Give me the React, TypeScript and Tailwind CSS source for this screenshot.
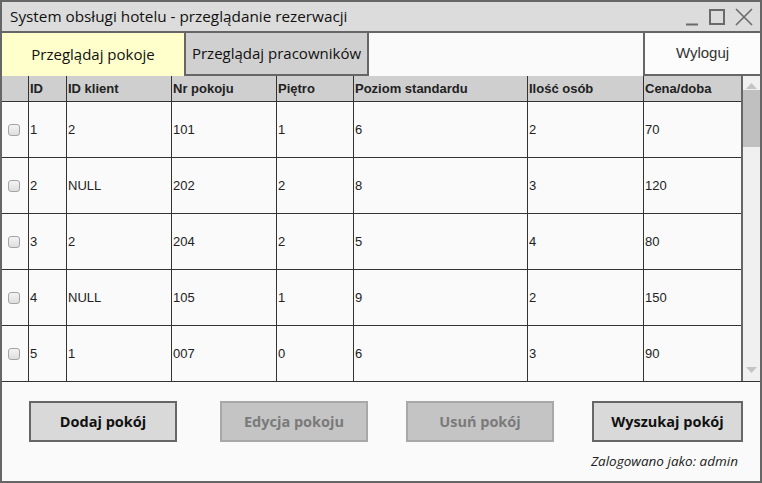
const rows = [
  ['1', '2', '101', '1', '6', '2', '70'],
  ['2', 'NULL', '202', '2', '8', '3', '120'],
  ['3', '2', '204', '2', '5', '4', '80'],
  ['4', 'NULL', '105', '1', '9', '2', '150'],
  ['5', '1', '007', '0', '6', '3', '90'],
];

const headers = ['ID', 'ID klient', 'Nr pokoju', 'Piętro', 'Poziom standardu', 'Ilość osób', 'Cena/doba'];
const widths = ['w-[38px]', 'w-[105px]', 'w-[105px]', 'w-[77px]', 'w-[174px]', 'w-[116px]', 'w-[98px]'];

function Checkbox() {
  return (
    <div className="w-[12px] h-[12px] rounded-[3px] border border-[#a3a3a3] bg-gradient-to-b from-[#f4f4f4] to-[#dedede]" />
  );
}

function WindowControls() {
  return (
    <div className="flex items-center gap-[10px] text-[#6a6a6a]">
      <svg width="14" height="18" viewBox="0 0 14 18">
        <path d="M1 16.5 H13" stroke="currentColor" strokeWidth="2" />
      </svg>
      <svg width="16" height="18" viewBox="0 0 16 18">
        <rect x="1" y="2" width="14" height="14" fill="none" stroke="currentColor" strokeWidth="2" />
      </svg>
      <svg width="18" height="18" viewBox="0 0 18 18">
        <path d="M1 1 L17 17 M17 1 L1 17" stroke="currentColor" strokeWidth="1.6" />
      </svg>
    </div>
  );
}

function ActionButton({ label, disabled, wide }: { label: string; disabled?: boolean; wide?: boolean }) {
  const size = wide ? 'w-[151px]' : 'w-[148px]';
  return (
    <button
      className={
        disabled
          ? `${size} h-[41px] border-2 border-[#a8a8a8] bg-[#c4c4c4] text-[#7a7a7a] text-[14.5px] font-bold`
          : `${size} h-[41px] border-2 border-[#666] bg-[#d9d9d9] text-[#111] text-[14.5px] font-bold`
      }
    >
      {label}
    </button>
  );
}

export default function App() {
  return (
    <div
      className="w-[762px] h-[483px] border-2 border-[#666] bg-[#fafafa] flex flex-col overflow-hidden"
      style={{ fontFamily: '"Open Sans", sans-serif' }}
    >
      {/* title bar */}
      <div className="h-[31px] shrink-0 bg-[#dcdcdc] border-b-2 border-[#666] flex items-center justify-between pl-[8px] pr-[7px]">
        <span className="text-[15.3px] font-medium text-[#111]">System obsługi hotelu - przeglądanie rezerwacji</span>
        <WindowControls />
      </div>

      {/* tabs */}
      <div className="h-[43px] shrink-0 flex">
        <div className="w-[182px] bg-[#ffffcc] flex items-center justify-center text-[15px] font-medium text-[#111]">
          Przeglądaj pokoje
        </div>
        <div className="w-[185px] bg-[#d0d0d0] border-2 border-t-0 border-[#666] flex items-center justify-center text-[15px] font-medium text-[#111]">
          Przeglądaj pracowników
        </div>
        <div className="flex-1" />
        <div
          className="w-[117px] bg-[#fcfcfc] border-l-2 border-b-2 border-[#666] flex items-center justify-center text-[15px] text-[#333]"
          style={{ fontFamily: '"Liberation Sans", Arial, sans-serif' }}
        >
          Wyloguj
        </div>
      </div>

      {/* table */}
      <div
        className="h-[306px] shrink-0 flex border-b border-[#333]"
        style={{ fontFamily: '"Liberation Sans", Arial, sans-serif' }}
      >
        <div className="w-[739px] flex flex-col">
          <div className="h-[26px] flex bg-[#cfcfcf] border-b border-[#333] text-[13px] font-bold text-[#222]">
            <div className="w-[26px]" />
            {headers.map((h, i) => (
              <div key={h} className={`${widths[i]} border-l border-[#333] flex items-center pl-[1px]`}>
                {h}
              </div>
            ))}
          </div>
          {rows.map((r, ri) => (
            <div
              key={ri}
              className={
                ri < rows.length - 1
                  ? 'h-[56px] flex border-b border-[#333] text-[13px] text-[#222]'
                  : 'h-[55px] flex text-[13px] text-[#222]'
              }
            >
              <div className="w-[26px] flex items-center pl-[6px]">
                <Checkbox />
              </div>
              {r.map((c, i) => (
                <div key={i} className={`${widths[i]} border-l border-[#333] flex items-center pl-[1px]`}>
                  {c}
                </div>
              ))}
            </div>
          ))}
        </div>
        {/* scrollbar */}
        <div className="w-[19px] border-l-2 border-[#666] bg-[#f0f0f0] flex flex-col">
          <div className="h-[13px] flex items-end justify-center">
            <svg width="11" height="6" viewBox="0 0 11 6">
              <path d="M0 6 L5.5 0 L11 6 Z" fill="#c4c4c4" />
            </svg>
          </div>
          <div className="mt-[1px] h-[57px] bg-[#c0c0c0]" />
          <div className="flex-1" />
          <div className="h-[14px] flex items-start justify-center">
            <svg width="11" height="6" viewBox="0 0 11 6">
              <path d="M0 0 L5.5 6 L11 0 Z" fill="#c4c4c4" />
            </svg>
          </div>
        </div>
      </div>

      {/* bottom */}
      <div className="flex-1 flex flex-col pt-[19px]">
        <div className="flex pl-[27px]">
          <ActionButton label="Dodaj pokój" />
          <div className="ml-[43px]">
            <ActionButton label="Edycja pokoju" disabled />
          </div>
          <div className="ml-[38px]">
            <ActionButton label="Usuń pokój" disabled />
          </div>
          <div className="ml-[38px]">
            <ActionButton label="Wyszukaj pokój" wide />
          </div>
        </div>
        <div className="flex justify-end pr-[22px] mt-[9px] text-[13.5px] italic text-[#222]">
          Zalogowano jako: admin
        </div>
      </div>
    </div>
  );
}
